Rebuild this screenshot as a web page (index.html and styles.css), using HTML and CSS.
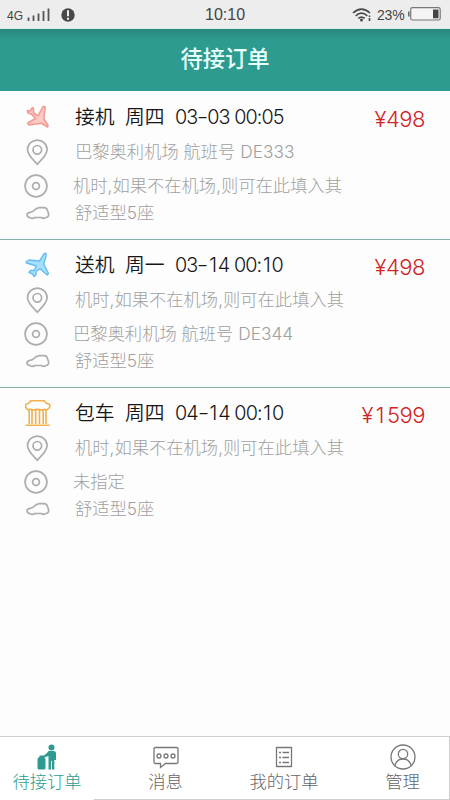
FILE: index.html
```html
<!DOCTYPE html>
<html lang="zh-CN">
<head>
<meta charset="utf-8">
<title>待接订单</title>
<link rel="stylesheet" href="styles.css">
</head>
<body>
<svg width="0" height="0" class="defs">
  <symbol id="pin" viewBox="0 0 24 28"><path d="M12.300 26.200C8.500 22.200 2.500 16.800 2.500 11.700a9.800 9.600 0 0 1 19.600 0C22.100 16.800 16.100 22.200 12.300 26.200Z"/><circle cx="12.300" cy="11.800" r="4.300"/></symbol>
  <symbol id="disc" viewBox="0 0 24 24"><circle cx="12" cy="12" r="10.900"/><circle cx="12" cy="12" r="3.400"/></symbol>
  <symbol id="car" viewBox="0 0 24 14"><path d="M4 11.600Q1 11.400 1 8.800 1.200 6.700 4 6.300 6.500 6.200 8 4.500 10 1.800 13.500 1.600H18Q20.700 1.600 21.300 4L22.500 7.500Q23.200 11 20.500 11.400 18 13.200 15.500 11.500H9Q6.500 13.200 4 11.600Z"/></symbol>
</svg>
<div class="status">
  <span class="net">4G</span>
  <svg class="bars" width="24" height="14" viewBox="0 0 24 14"><path d="M1.500 13V9.500M6.500 13V7.500M11.500 13V5.500M16.500 13V3M21.500 13V0.500"/></svg>
  <svg class="alert" width="14" height="14" viewBox="0 0 14 14"><circle cx="7" cy="7" r="6.700" fill="#494949"/><path d="M7 2.200V8.300M7 9.700V11.800" stroke="#eee" stroke-width="2"/></svg>
  <span class="clock">10:10</span>
  <svg class="wifi" width="20" height="14" viewBox="0 0 20 14"><path d="M1 5Q9.500-2.800 18 5M3.700 7.800Q9.500 2.500 15.300 7.800M6.300 10.400Q9.500 7.700 12.700 10.400" fill="none" stroke="#494949" stroke-width="1.600"/><circle cx="9.500" cy="12" r="1.500" fill="#494949"/><path d="M17.500 7.500V9M17.500 10V13" stroke="#494949" stroke-width="1.600"/></svg>
  <span class="pct">23%</span>
  <svg class="battery" width="33" height="14" viewBox="0 0 33 14"><rect x="2.700" y=".7" width="29.500" height="12.300" rx="1.800" fill="#f5f5f5" stroke="#777" stroke-width="1.200"/><path d="M.8 4.500V9.500" stroke="#666" stroke-width="1.500"/><rect x="25" y="2.500" width="5.500" height="8.800" fill="#444"/></svg>
</div>
<header class="header">待接订单</header>
<main class="orders">
  <section class="order">
    <div class="row head">
      <span class="icon"><svg class="trip pickup" width="24" height="24" viewBox="0 0 24 24"><path d="M2.500 5.500 5 6 7.500 2.500 8.500 3.500 8.500 8 13 11 18 1.500 20.200 2 18.800 14 23 20.300 22.500 22 16.500 18.300 4 20 2.800 18 10.500 13.500 6.500 9.200 3 8Z"/></svg></span>
      <h2><span>接机</span><span>周四</span><time>03<i>-</i>03 00:05</time></h2><b class="price">¥498</b>
    </div>
    <div class="row"><span class="icon"><svg class="line" width="24" height="28"><use href="#pin"/></svg></span><p>巴黎奥利机场 航班号 DE333</p></div>
    <div class="row shift"><span class="icon"><svg class="line" width="24" height="24"><use href="#disc"/></svg></span><p>机时,如果不在机场,则可在此填入其</p></div>
    <div class="row last"><span class="icon"><svg class="line" width="24" height="14"><use href="#car"/></svg></span><p>舒适型5座</p></div>
  </section>
  <section class="order">
    <div class="row head">
      <span class="icon"><svg class="trip dropoff" width="26" height="26" viewBox="0 0 26 26"><path d="M1.200 9.500 4 8 14.500 9 19.300 1.500 21 1.500 21 4.500 18.700 12 23.500 21.500 22.200 23 15 16.800 11 19.500 11 23 9 24.500 7.500 21.800 4 20.500 5.500 18.500 9 18.300 11.500 14 1.500 11Z"/></svg></span>
      <h2><span>送机</span><span>周一</span><time>03<i>-</i><em>1</em>4 00:<em>1</em>0</time></h2><b class="price">¥498</b>
    </div>
    <div class="row"><span class="icon"><svg class="line" width="24" height="28"><use href="#pin"/></svg></span><p>机时,如果不在机场,则可在此填入其</p></div>
    <div class="row shift"><span class="icon"><svg class="line" width="24" height="24"><use href="#disc"/></svg></span><p>巴黎奥利机场 航班号 DE344</p></div>
    <div class="row last"><span class="icon"><svg class="line" width="24" height="14"><use href="#car"/></svg></span><p>舒适型5座</p></div>
  </section>
  <section class="order">
    <div class="row head">
      <span class="icon"><svg class="trip charter" width="26" height="28" viewBox="0 0 26 28"><path d="M5.500 1.700H19.500Q20.500 4.700 24.700 5.200V8.500L21.500 11.200Q19.500 9.500 17 11.200 12.500 9.500 8 11.200 5.500 9.500 3.500 11.200L.7 8.500V5.200Q4.500 4.700 5.500 1.700ZM4.200 11V25M7 11V25M10.700 11V25M14.500 11V25M18.200 11V25M21 11V25M.5 26.200H24.700"/></svg></span>
      <h2><span>包车</span><span>周四</span><time>04<i>-</i><em>1</em>4 00:<em>1</em>0</time></h2><b class="price">¥<em>1</em>599</b>
    </div>
    <div class="row"><span class="icon"><svg class="line" width="24" height="28"><use href="#pin"/></svg></span><p>机时,如果不在机场,则可在此填入其</p></div>
    <div class="row shift"><span class="icon"><svg class="line" width="24" height="24"><use href="#disc"/></svg></span><p>未指定</p></div>
    <div class="row last"><span class="icon"><svg class="line" width="24" height="14"><use href="#car"/></svg></span><p>舒适型5座</p></div>
  </section>
</main>
<nav class="tabs">
  <a class="tab active"><svg width="20" height="26" viewBox="0 0 20 26"><circle cx="14.500" cy="3.500" r="3"/><path d="M11.500 7H16.500Q19 7 19 9.500V16H17.300V25.500H15V17H14V25.500H11.500V12L6.800 13.500 6.300 12 10 9ZM2.500 13V11.500H6.500V13Q8.500 13.200 8.500 15.500V24.500L7.500 25.500H1.500L.5 24.500V15.500Q.5 13.200 2.500 13Z"/></svg><span>待接订单</span></a>
  <a class="tab"><svg width="26" height="26" viewBox="0 0 26 26"><path d="M2.500 3.500H23.500Q25 3.500 25 5V18Q25 19.500 23.500 19.500H12.500L7.500 23.500V19.500H2.500Q1 19.500 1 18V5Q1 3.500 2.500 3.500Z"/><circle cx="6" cy="12" r="2"/><circle cx="13" cy="12" r="2"/><circle cx="20" cy="12" r="2"/></svg><span>消息</span></a>
  <a class="tab"><svg width="18" height="26" viewBox="0 0 18 26"><path d="M1.500 3.500H16.500V22.500H1.500ZM4 8.500H6M7.500 8.500H14M4 13.500H6M7.500 13.500H14M4 18.500H6M7.500 18.500H14"/></svg><span>我的订单</span></a>
  <a class="tab profile"><svg width="26" height="26" viewBox="0 0 26 26"><circle cx="13" cy="13" r="12"/><circle cx="13" cy="10" r="4.700"/><path d="M5 21.500Q6.500 15 13 15T21 21.500"/></svg><span>管理</span></a>
</nav>
</body>
</html>
```
FILE: styles.css
```css
* { box-sizing: border-box; }
body {
  margin: 0;
  width: 450px;
  height: 800px;
  overflow: hidden;
  display: flex;
  flex-direction: column;
  background: #fdfdfd;
  font-family: Inter, "Noto Sans CJK SC", sans-serif;
  font-weight: 300;
}
svg { display: block; flex: none; }
.defs { position: absolute; }
.status {
  height: 28px;
  flex: none;
  display: flex;
  align-items: center;
  padding: 1px 9px 0 7px;
  background: #ededed;
  color: #444;
  font-family: "Liberation Sans", sans-serif;
  font-weight: 400;
}
.net { width: 20px; font-size: 12px; padding-top: 3px; }
.bars { fill: none; stroke: #555; stroke-width: 1.800; }
.alert { margin-left: 10px; }
.clock { margin-left: 130px; width: 147px; font-size: 16px; }
.pct { margin-left: 5px; width: 31px; font-size: 14px; letter-spacing: -.2px; }
.battery { margin-top: -1px; }
.header {
  height: 63px;
  flex: none;
  border-top: 1px solid #d7eeea;
  background: linear-gradient(#2b887e, #2e9b90 12px);
  color: #e9fffb;
  font-size: 22.300px;
  font-weight: 500;
  line-height: 60px;
  text-align: center;
}
.orders { flex: 1; padding-top: 1px; }
.order { height: 148px; padding-top: 8px; border-bottom: 1px solid #86b2ad; }
.order:last-child { border-bottom: 0; }
.row {
  height: 34px;
  display: flex;
  align-items: center;
  padding-right: 25px;
  padding-top: 1px;
  white-space: nowrap;
}
.row.head { padding-top: 0; }
.row.last { height: 21px; padding-top: 0; }
.icon { width: 75px; flex: none; padding-left: 25px; }
.shift .icon { width: 73px; padding-left: 24px; }
.last .icon { padding-left: 26px; }
.row p { margin: 0; color: #a0a0a0; font-size: 17.300px; line-height: 22px; }
.line { fill: none; stroke: #adadad; stroke-width: 1.700; }
.trip { stroke-linejoin: round; }
.pickup { fill: #ffc9c4; stroke: #f39a96; stroke-width: 1.600; }
.dropoff { fill: #a5dffb; stroke: #67bdf0; stroke-width: 1.400; }
.charter { fill: none; stroke: #f2b04c; stroke-width: 1.600; }
h2 { display: flex; margin: 0; color: #161616; font-size: 19.800px; font-weight: 350; line-height: 28px; }
h2 span { width: 50px; }
h2 time { font-weight: 300; letter-spacing: -.95px; }
em { display: inline-block; width: .53em; font-style: normal; text-align: center; }
h2 i { display: inline-block; font-style: normal; transform: scaleX(1.300); padding: 0 1px; }
.price { margin-left: auto; padding-top: 3px; color: #cf2626; font-size: 22px; font-weight: 300; letter-spacing: -.5px; }
.price em { width: .64em; }
.tabs {
  height: 64px;
  flex: none;
  display: grid;
  grid-template-columns: 94px 143px 94px 1fr;
  border-top: 1px solid #cfcfcf;
  border-right: 1px solid #cfcfcf;
  background: #fff;
}
.tab {
  display: flex;
  flex-direction: column;
  align-items: center;
  padding-top: 7px;
  border-bottom: 1px solid #cfcfcf;
  color: #666;
  font-size: 17.300px;
  line-height: 23px;
}
.tab svg { fill: none; stroke: #777; stroke-width: 1.300; }
.tab.profile { padding-left: 25px; }
.tab.active { color: #2e9b90; border-bottom-color: transparent; }
.tab.active svg { fill: #2e9b90; stroke: none; }
```
